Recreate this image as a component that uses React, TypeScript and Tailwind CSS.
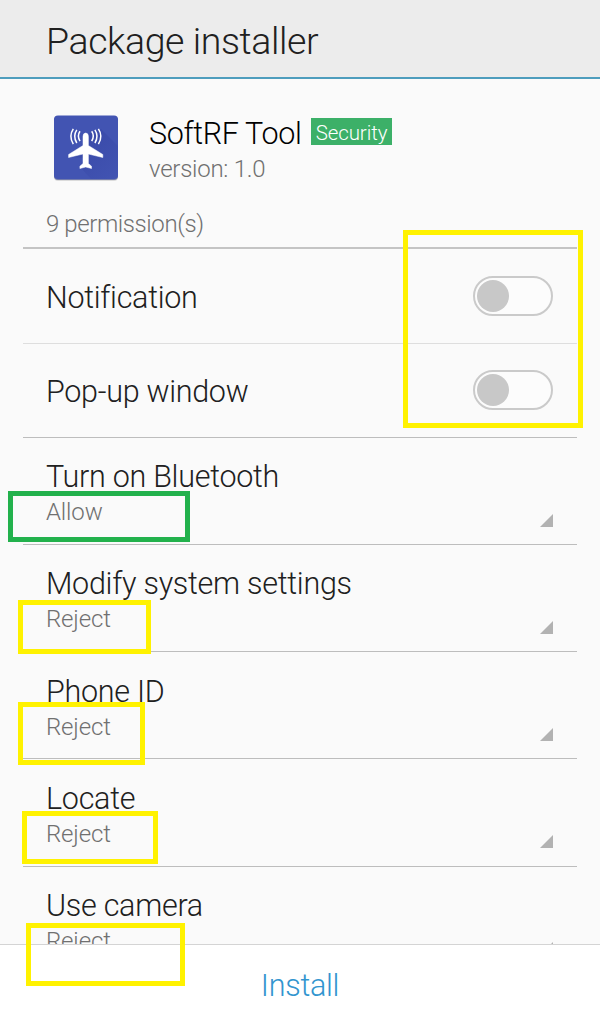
const toggles = ["Notification", "Pop-up window"];

const permissions = [
  { name: "Turn on Bluetooth", value: "Allow" },
  { name: "Modify system settings", value: "Reject" },
  { name: "Phone ID", value: "Reject" },
  { name: "Locate", value: "Reject" },
  { name: "Use camera", value: "Reject" },
];

function AppIcon() {
  return (
    <svg className="h-[70px] w-[70px] shrink-0" viewBox="51 112 70 70">
      <defs>
        <linearGradient id="shade" x1="0" y1="0" x2="1" y2="1">
          <stop offset="0" stopColor="#303f9f" stopOpacity=".6" />
          <stop offset="1" stopColor="#303f9f" stopOpacity="0" />
        </linearGradient>
      </defs>
      <rect x="54" y="117" width="64" height="64" rx="4" fill="#000" opacity=".12" />
      <rect x="54" y="116.500" width="64" height="63.500" rx="4" fill="#2c3a8c" opacity=".6" />
      <rect x="54" y="115.500" width="64" height="63.500" rx="4" fill="#4254b2" />
      <path d="M88 134L101 129L118 146V175Q118 179 114 179H91L80 167L85 158L69 157L84 145Z" fill="url(#shade)" />
      <path
        d="M83 136.500Q83 133 85.700 133Q88.400 133 88.400 136.500V145.500L102.800 154.500V157.500L88.400 154V163.500L91.500 166.200V168.500L85.700 167L79.900 168.500V166.200L83 163.500V154L68.600 157.500V154.500L83 145.500Z"
        fill="#fff"
        stroke="#fff"
        strokeWidth=".5"
      />
      <g fill="none" stroke="#fff" strokeWidth="1.500">
        <path d="M80 131.200Q76.800 135.800 80 141.200" />
        <path d="M76.800 129.800Q72.600 136 76.800 143" />
        <path d="M73.300 128.800Q68.400 136 73.300 144.200" />
        <path d="M91.700 131.200Q94.900 135.800 91.700 141.200" />
        <path d="M94.900 129.800Q99.100 136 94.900 143" />
        <path d="M98.400 128.800Q103.300 136 98.400 144.200" />
      </g>
    </svg>
  );
}

function Toggle() {
  return (
    <span className="mb-px flex h-10 w-20 items-center rounded-full border-2 border-[#cacaca] bg-[#fcfcfc] pl-[2px]">
      <span className="size-8 rounded-full bg-[#c8c8c8]" />
    </span>
  );
}

export default function App() {
  return (
    <div className="relative flex h-[1024px] w-[600px] flex-col overflow-hidden bg-[#fafafa] font-['Roboto',sans-serif] font-light text-[#202020]">
      <header className="flex h-[79px] shrink-0 items-center border-b-2 border-[#4e9dbd] bg-[#ececec] pt-[4px] pl-[46px]">
        <h1 className="text-[37.500px] leading-[44px] tracking-[-0.42px] whitespace-nowrap">Package installer</h1>
      </header>

      <main className="flex h-[865px] shrink-0 flex-col overflow-hidden">
        <section className="flex h-[129px] shrink-0 pt-[33px] pl-[51px]">
          <AppIcon />
          <div className="ml-[28px]">
            <div className="flex h-[43px] items-start gap-[9px]">
              <span className="w-[153px] pt-[4px] text-[30.500px] leading-[36px] tracking-[-0.35px] whitespace-nowrap text-black">
                SoftRF Tool
              </span>
              <span className="mt-[6px] flex h-[27px] w-[81px] items-center justify-center bg-[#3cb068] pt-[2px] text-[20.500px] leading-[26px] tracking-[-0.1px] text-white">
                Security
              </span>
            </div>
            <div className="text-[24px] leading-[28px] tracking-[-0.25px] text-[#707070]">version: 1.0</div>
          </div>
        </section>
        <div className="mx-[23px] flex h-[41px] shrink-0 border-b-2 border-[#c4c4c4] pt-[2px] pl-[23px] text-[24px] leading-[28px] tracking-[-0.4px] text-[#707070]">
          9 permission(s)
        </div>

        {toggles.map((name, i) => (
          <div
            key={name}
            className={`mx-[23px] flex shrink-0 items-center justify-between border-b pr-6 pl-[23px] ${
              i === 0 ? "h-[95px] border-[#dedede]" : "h-[94px] border-[#bdbdbd]"
            }`}
          >
            <span className="pt-[3px] text-[30.500px] leading-[36px] tracking-[-0.29px] whitespace-nowrap">{name}</span>
            <Toggle />
          </div>
        ))}

        {permissions.map(({ name, value }) => (
          <div
            key={name}
            className="mx-[23px] flex h-[107.150px] shrink-0 items-start justify-between border-b border-[#bdbdbd] pt-[21.300px] pr-6 pl-[23px]"
          >
            <div>
              <div className="text-[30.500px] leading-[36px] tracking-[-0.27px] whitespace-nowrap">{name}</div>
              <div className="mt-[3px] text-[24px] leading-[28px] tracking-[-0.15px] text-[#707070]">{value}</div>
            </div>
            <svg className="mt-[54.500px] h-[13px] w-[13px]" viewBox="0 0 13 13">
              <path d="M13 0V13H0Z" fill="#b2b2b2" />
            </svg>
          </div>
        ))}
      </main>

      <footer className="flex h-20 shrink-0 items-center justify-center border-t border-[#d4d4d4] bg-white pt-[2px]">
        <button className="text-[30.500px] leading-[36px] tracking-[-0.27px] text-[#3295cf]">Install</button>
      </footer>

      <div className="absolute top-[230px] left-[403px] h-[198px] w-[180px] border-5 border-[#fff200]" />
      <div className="absolute top-[491px] left-[8px] h-[51px] w-[182px] border-5 border-[#22b14c]" />
      <div className="absolute top-[600px] left-[18px] h-[54px] w-[133px] border-5 border-[#fff200]" />
      <div className="absolute top-[702px] left-[18px] h-[63px] w-[127px] border-5 border-[#fff200]" />
      <div className="absolute top-[811px] left-[22px] h-[53px] w-[136px] border-5 border-[#fff200]" />
      <div className="absolute top-[923px] left-[26px] h-[63px] w-[159px] border-5 border-[#fff200]" />
    </div>
  );
}
